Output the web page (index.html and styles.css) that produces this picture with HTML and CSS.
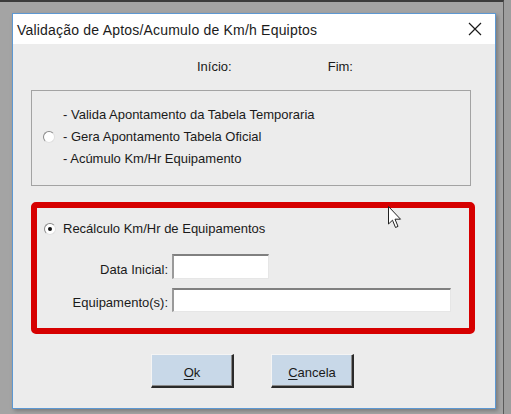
FILE: index.html
```html
<!DOCTYPE html>
<html>
<head>
<meta charset="utf-8">
<link rel="stylesheet" href="styles.css">
</head>
<body>
<div class="screen">
  <div class="window">
    <div class="titlebar">
      <span class="title">Validação de Aptos/Acumulo de Km/h Equiptos</span>
      <svg class="close" width="14" height="14" viewBox="0 0 14 14"><path d="M1 1L13 13M13 1L1 13" stroke="#1a1a1a" stroke-width="1.2" fill="none"/></svg>
    </div>
    <div class="content">
      <div class="info">
        <span class="inicio">Início:</span>
        <span class="fim">Fim:</span>
      </div>
      <div class="group">
        <span class="radio"></span>
        <div class="lines">
          <div>- Valida Apontamento da Tabela Temporaria</div>
          <div>- Gera Apontamento Tabela Oficial</div>
          <div>- Acúmulo Km/Hr Equipamento</div>
        </div>
      </div>
      <div class="redbox">
        <div class="radio-row">
          <span class="radio checked"></span>
          <span>Recálculo Km/Hr de Equipamentos</span>
        </div>
        <div class="fields">
          <span class="label">Data Inicial:</span>
          <span class="input short"></span>
          <span class="label">Equipamento(s):</span>
          <span class="input long"></span>
        </div>
      </div>
      <div class="buttons">
        <div class="btn"><u>O</u>k</div>
        <div class="btn"><u>C</u>ancela</div>
      </div>
    </div>
  </div>
  <svg class="cursor" width="18" height="26" viewBox="0 0 18 26">
    <path d="M1.5 1.5 L1.5 19 L5.5 15.2 L8.5 22.5 L11 21.4 L8 14.2 L13.5 14.2 Z" fill="#fff" stroke="#222" stroke-width="1" stroke-linejoin="round"/>
  </svg>
</div>
</body>
</html>
```
FILE: styles.css
```css
html, body {
  margin: 0;
  padding: 0;
}
body {
  width: 511px;
  height: 414px;
  overflow: hidden;
  background: #9e9e9e;
  font-family: "Liberation Sans", Arial, sans-serif;
}
.screen {
  position: relative;
  width: 504px;
  height: 414px;
  border-top: 2px solid #3c3c3c;
  border-right: 1px solid #5a5a5a;
  background: #a4a4a4;
  padding: 11px 0 0 12px;
  box-sizing: border-box;
}
.window {
  width: 484px;
  height: 396px;
  box-sizing: border-box;
  border: 1px solid #5d98d2;
  background: #ececec;
  box-shadow: 2px 2px 4px rgba(0,0,0,0.25);
  display: flex;
  flex-direction: column;
}
.titlebar {
  height: 30px;
  background: #ffffff;
  display: flex;
  align-items: center;
  padding: 0 13px 0 4px;
  flex-shrink: 0;
}
.title {
  flex: 1;
  font-family: "Liberation Sans", Arial, sans-serif;
  font-size: 14px;
  color: #1b1b1b;
  letter-spacing: 0.2px;
  padding-top: 1px;
}
.close {
  display: block;
}
.content {
  flex: 1;
  font-size: 13px;
  color: #1a1a1a;
  display: flex;
  flex-direction: column;
}
.info {
  padding-top: 15px;
  height: 16px;
  line-height: 16px;
  display: flex;
}
.inicio {
  margin-left: 184px;
}
.fim {
  margin-left: 96px;
}
.group {
  margin: 15px 0 0 18px;
  width: 440px;
  box-sizing: border-box;
  border: 1px solid #a3a3a3;
  padding: 13px 0 15px 11px;
  display: flex;
  align-items: center;
  gap: 8px;
}
.lines div {
  line-height: 22px;
  height: 22px;
}
.radio {
  width: 12px;
  height: 12px;
  box-sizing: border-box;
  border-radius: 50%;
  background: #ffffff;
  border: 1px solid #8a8a8a;
  border-right-color: #e0e0e0;
  border-bottom-color: #e0e0e0;
  display: inline-block;
  position: relative;
  flex-shrink: 0;
}
.radio.checked::after {
  content: "";
  position: absolute;
  left: 3px;
  top: 3px;
  width: 4px;
  height: 4px;
  border-radius: 50%;
  background: #111;
}
.redbox {
  margin: 16px 0 0 18px;
  width: 444px;
  height: 132px;
  box-sizing: border-box;
  border: 6px solid #d60000;
  border-radius: 5px;
  padding: 13px 0 0 7px;
}
.radio-row {
  display: flex;
  align-items: center;
  gap: 7px;
  height: 16px;
  line-height: 16px;
}
.fields {
  margin-top: 18px;
  display: grid;
  grid-template-columns: 124px 97px;
  grid-auto-rows: 24px;
  column-gap: 4px;
  row-gap: 9px;
}
.label {
  text-align: right;
  align-self: end;
  line-height: 15px;
  padding-bottom: 2px;
  white-space: nowrap;
}
.input {
  display: block;
  height: 24px;
  box-sizing: border-box;
  background: #ffffff;
  border-top: 2px solid #808080;
  border-left: 2px solid #9a9a9a;
  border-right: 1px solid #e6e6e6;
  border-bottom: 1px solid #e6e6e6;
}
.input.short {
  width: 97px;
  height: 25px;
  margin-top: -1px;
}
.input.long {
  width: 279px;
}
.buttons {
  display: flex;
  gap: 37px;
  margin: 20px 0 0 138px;
}
.btn {
  width: 83px;
  height: 34px;
  box-sizing: border-box;
  background: #c8d8e8;
  border-top: 1px solid #f4f4f4;
  border-left: 1px solid #f4f4f4;
  border-right: 2px solid #2a2a2a;
  border-bottom: 2px solid #2a2a2a;
  box-shadow: inset -1px -1px 0 #8a8a8a;
  display: flex;
  align-items: center;
  justify-content: center;
  font-size: 13px;
  padding-top: 4px;
}
.btn u {
  text-decoration: underline;
  text-underline-offset: 2px;
}
.cursor {
  position: absolute;
  left: 387px;
  top: 203px;
}
```
